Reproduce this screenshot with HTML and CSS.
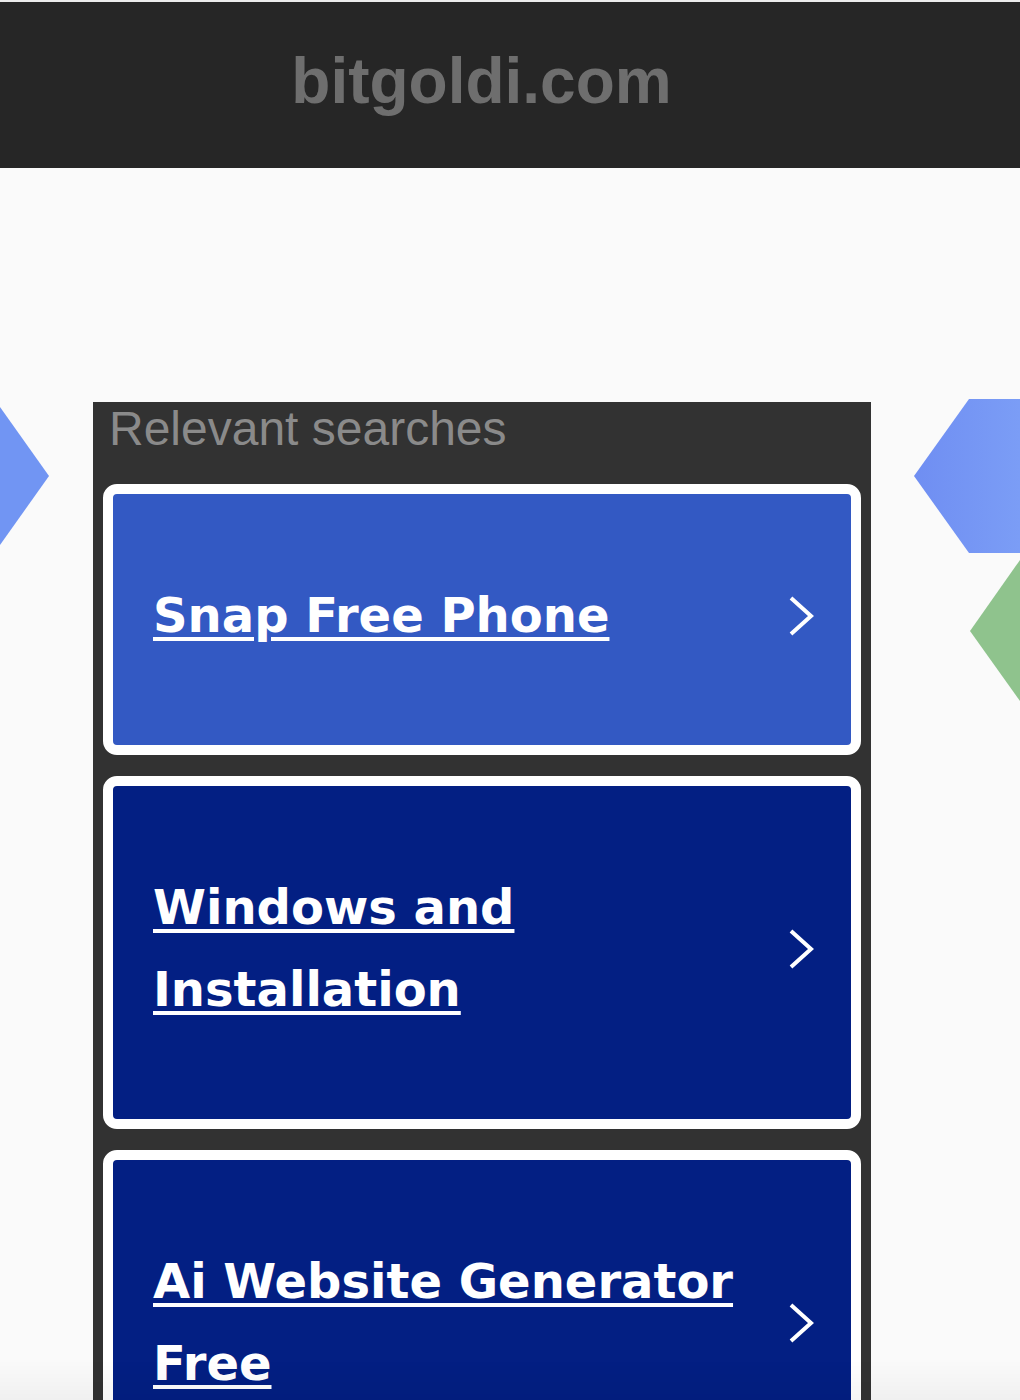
FILE: index.html
```html
<!DOCTYPE html>
<html lang="en">
<head>
<meta charset="utf-8">
<title>bitgoldi.com</title>
<link rel="stylesheet" href="styles.css">
</head>
<body>
<header class="site-header">
  <span class="logo">bitgoldi.com</span>
</header>

<div class="deco deco-left"></div>
<div class="deco deco-right"></div>
<div class="deco deco-green"></div>

<main class="content">
  <section class="panel">
    <h2 class="panel-title">Relevant searches</h2>
    <div class="cards">
      <a class="card card-light" href="#">
        <span class="card-text">Snap Free Phone</span>
        <svg class="chev" width="28" height="42" viewBox="0 0 28 42"><polyline points="4,3 24,21 4,39" fill="none" stroke="#fff" stroke-width="4"/></svg>
      </a>
      <a class="card" href="#">
        <span class="card-text">Windows and Installation</span>
        <svg class="chev" width="28" height="42" viewBox="0 0 28 42"><polyline points="4,3 24,21 4,39" fill="none" stroke="#fff" stroke-width="4"/></svg>
      </a>
      <a class="card" href="#">
        <span class="card-text">Ai Website Generator Free</span>
        <svg class="chev" width="28" height="42" viewBox="0 0 28 42"><polyline points="4,3 24,21 4,39" fill="none" stroke="#fff" stroke-width="4"/></svg>
      </a>
    </div>
  </section>
</main>
<div class="bottom-fade"></div>
</body>
</html>
```

FILE: styles.css
```css
html, body {
  margin: 0;
  padding: 0;
}
body {
  background: #fafafa;
  font-family: "Liberation Sans", Arial, sans-serif;
  overflow-x: hidden;
  position: relative;
  min-height: 1400px;
}
.site-header {
  border-top: 2px solid #ececec;
  height: 158px;
  padding-bottom: 8px;
  background: #262626;
  display: flex;
  justify-content: center;
  padding-right: 57px;
}
.logo {
  font-family: "Liberation Sans", Arial, sans-serif;
  font-weight: bold;
  font-size: 64px;
  line-height: 158px;
  color: #6e6e6e;
}
.content {
  padding-top: 234px;
  padding-left: 93px;
}
.panel {
  width: 778px;
  background: #323232;
  padding: 0 10px 40px 10px;
  box-sizing: border-box;
}
.panel-title {
  margin: 0;
  padding-left: 6px;
  font-weight: normal;
  font-size: 48px;
  line-height: 53px;
  color: #8a8a8a;
  font-family: "Liberation Sans", Arial, sans-serif;
}
.cards {
  margin-top: 29px;
  display: flex;
  flex-direction: column;
  gap: 21px;
}
.card {
  display: flex;
  align-items: center;
  justify-content: space-between;
  background: #031f83;
  border: 10px solid #ffffff;
  border-radius: 14px;
  padding: 80px 36px 89px 40px;
  text-decoration: none;
}
.card-light {
  background: #3359c3;
}
.card-text {
  max-width: 600px;
  font-family: "DejaVu Sans", Verdana, sans-serif;
  font-weight: bold;
  font-size: 48px;
  line-height: 82px;
  color: #ffffff;
  text-decoration: underline;
  text-decoration-thickness: 4px;
  text-underline-offset: 5px;
}
.chev {
  flex: none;
  display: block;
  margin-top: 1px;
}
.deco {
  position: absolute;
}
.deco-left {
  left: 0;
  top: 399px;
  width: 49px;
  height: 154px;
  background: #7195f3;
  clip-path: polygon(0 8px, 49px 77px, 0 146px);
}
.deco-right {
  left: 914px;
  top: 399px;
  width: 106px;
  height: 154px;
  background: linear-gradient(to right, #6f8ef2, #7b9df6);
  clip-path: polygon(55px 0, 106px 0, 106px 154px, 55px 154px, 0 77px);
}
.deco-green {
  left: 970px;
  top: 553px;
  width: 50px;
  height: 155px;
  background: #8fc38d;
  clip-path: polygon(50px 7px, 0 78px, 50px 148px);
}
.bottom-fade {
  position: fixed;
  left: 0;
  right: 0;
  bottom: 0;
  height: 40px;
  background: linear-gradient(to bottom, rgba(0,0,0,0), rgba(0,0,0,0.04));
  pointer-events: none;
}
```
